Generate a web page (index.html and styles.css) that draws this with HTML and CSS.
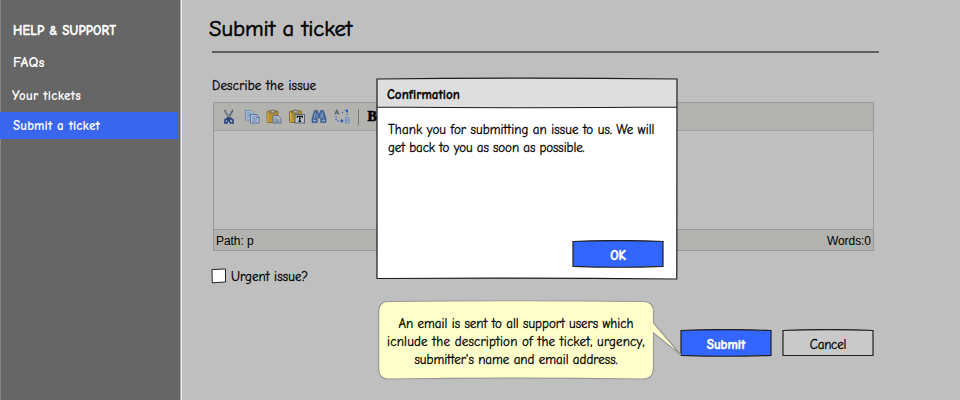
FILE: index.html
```html
<!DOCTYPE html>
<html lang="en">
<head>
<meta charset="utf-8">
<title>Submit a ticket</title>
<link rel="stylesheet" href="styles.css">
</head>
<body>
<div class="app">
  <nav class="sidebar">
    <h2 class="nav-title"><span class="t-help">HELP &amp; SUPPORT</span></h2>
    <a class="nav-item nav-faqs"><span class="t-faqs">FAQs</span></a>
    <a class="nav-item nav-tickets"><span class="t-your">Your tickets</span></a>
    <a class="nav-item active"><span class="t-nav-submit">Submit a ticket</span></a>
  </nav>
  <main class="main">
    <h1 class="title"><span class="t-title">Submit a ticket</span></h1>
    <label class="label"><span class="t-describe">Describe the issue</span></label>
    <section class="editor">
      <div class="toolbar">
        <svg class="tool" viewBox="0 0 16 16"><path d="M3.500 1l6 10M12 1l-6 10" stroke="#5f6b78" stroke-width="1.800" fill="none"/><path d="M4.500 2l4.500 7" stroke="#9aa6b0" stroke-width=".7"/><path d="M7.500 8.500L4 11v3h2l1.500-4L9.500 14h2.500v-3L8.500 8.500" fill="none" stroke="#24447e" stroke-width="1.600"/></svg>
        <svg class="tool" viewBox="0 0 16 16"><path d="M1.500 1.500h5.500l2.500 2.500v7h-8z" fill="#aebdd0" stroke="#6482ae" stroke-width=".8"/><path d="M3 4h4M3 6h5M3 8h4" stroke="#5c80b5" stroke-width=".8"/><path d="M6.500 5.500h6l2.500 2.500v6h-8.500z" fill="#b9c6d6" stroke="#4a6da6" stroke-width=".9"/><path d="M12 5.500V8.500h3M8 8h3M8 10h5M8 12h5" fill="none" stroke="#4a70aa" stroke-width=".8"/></svg>
        <svg class="tool" viewBox="0 0 16 16"><rect x="1" y="2" width="11" height="11.500" rx="1" fill="#b8922f" stroke="#84651f" stroke-width=".8"/><path d="M2 4v9" stroke="#d2b458"/><path d="M4 4V2h1.500L6.500.5 8 2h1.500v2z" fill="#b5b6a8" stroke="#595951" stroke-width=".8"/><path d="M7 6.500h5l3 3v4.500H7z" fill="#b4bdca" stroke="#47617f" stroke-width=".8"/><path d="M8.500 9h2.500M8.500 11h5M8.500 12.700h5" stroke="#506c91" stroke-width=".8"/></svg>
        <svg class="tool" viewBox="0 0 16 16"><rect x=".5" y="2" width="12" height="11.500" rx="1" fill="#b8922f" stroke="#84651f" stroke-width=".8"/><path d="M1.500 4v9" stroke="#d2b458"/><path d="M3.500 4V2h2l1-1.500L8 2h1.500v2z" fill="#b5b6a8" stroke="#595951" stroke-width=".8"/><rect x="6" y="5.500" width="9.500" height="8.500" fill="#b9c0c8" stroke="#40516a" stroke-width=".8"/><path d="M8.300 8.700V7.300h5v1.400M10.800 7.300v5M9.500 12.300H12" stroke="#111" stroke-width="1.300" fill="none"/></svg>
        <svg class="tool" viewBox="0 0 16 16"><path d="M3.500 1.500h3l.7 3h1.600l.7-3h3l2.500 8v4H9.700V9H6.300v4.500H1v-4z" fill="#446699" stroke="#34527f" stroke-width=".6"/><path d="M4.500 3.500L3 9.500M11 3.500l1.200 6M6 5v4M10 5v4" stroke="#91aacb" stroke-width=".9"/><path d="M2 11.500h3M11 11.500h3" stroke="#93aac5" stroke-width="1.400"/></svg>
        <svg class="tool" viewBox="0 0 16 16"><path d="M.8 5.500L2.800.8l2 4.700M1.600 4h2.600" fill="none" stroke="#414d60" stroke-width=".9"/><path d="M11.500 8.500h2q1.500 0 1.500 1.300T13.500 11H12h2q1.500 0 1.500 1.500T14 14h-2.500z" fill="none" stroke="#6488ca" stroke-width=".9"/><path d="M2 7.500v3l2 1.500h3" fill="none" stroke="#3464bc" stroke-width="1.300" stroke-dasharray="1.300 1.300"/><path d="M7 9.800L9.800 12 7 14zM10.500.7h3.500v3.600z" fill="#2858bb"/><path d="M8 4l2-2M13 5v2.500" fill="none" stroke="#3464bc" stroke-width="1.200" stroke-dasharray="1.300 1.300"/></svg>
        <span class="tool-sep"></span>
        <b class="tool-bold">B</b>
      </div>
      <div class="editor-body"></div>
      <div class="status"><span class="t-path">Path: p</span><span class="t-words">Words:0</span></div>
    </section>
    <label class="urgent">
      <svg class="checkbox" viewBox="0 0 16 16"><path d="M1 1.500L14.500 1V14L1.300 14.800z" fill="#fff" stroke="#222"/></svg>
      <span class="t-urgent">Urgent issue?</span>
    </label>
    <div class="actions">
      <button class="btn primary"><svg class="btn-shape" viewBox="0 0 92 28"><path d="M1 1.500Q46-.4 91 1.500L91 26.300Q46 28.200 1 26.300z"/></svg><span class="t-submit">Submit</span></button>
      <button class="btn"><svg class="btn-shape" viewBox="0 0 92 28"><path d="M1 1.500Q46-.4 91 1.500L91 26.500H1z"/></svg><span class="t-cancel">Cancel</span></button>
    </div>
  </main>

  <div class="dialog" role="dialog">
    <svg class="dialog-shape" viewBox="0 0 302 203"><path d="M1 2Q151 .2 301 2L300.800 202Q150 200.500 1 201.500z" fill="#fff"/><path d="M1 2Q151 .2 301 2V30Q151 31.500 1 30z" fill="#dedede"/><path d="M1 30Q151 31.500 301 30M1 2Q151 .2 301 2L300.800 202Q150 200.500 1 201.500z" fill="none" stroke="#1c1c1c" stroke-width="1.200"/></svg>
    <div class="dialog-content">
      <h3 class="dialog-title"><span class="t-confirm">Confirmation</span></h3>
      <p class="dialog-text"><span class="t-thank">Thank you for submitting an issue to us. We will</span><br><span class="t-get">get back to you as soon as possible.</span></p>
      <button class="btn primary dialog-ok"><svg class="btn-shape" viewBox="0 0 92 28"><path d="M1 1.500Q46-.4 91 1.500L91 26.300Q46 28.200 1 26.300z"/></svg><span class="t-ok">OK</span></button>
    </div>
  </div>

  <aside class="callout">
    <svg class="callout-shape" viewBox="0 0 304 80"><path d="M10 1.500Q140 0 265 1.500Q275.500 1.500 275.500 12V23L303 55L275.500 33V68Q275.500 79 265 79Q140 77.300 10 79Q.7 79 .7 68V12Q.7 1.500 10 1.500z" fill="#ffffcb" stroke="#999" stroke-width="1.200"/></svg>
    <p class="callout-text"><span class="t-c1">An email is sent to all support users which</span><br><span class="t-c2">icnlude the description of the ticket, urgency,</span><br><span class="t-c3">submitter's name and email address.</span></p>
  </aside>
</div>
</body>
</html>
```
FILE: styles.css
```css
* { box-sizing: border-box; }
body {
  margin: 0;
  background: #bfbfbf;
  color: #000;
  font: 13px/18px "Comic Sans MS", "Comic Neue", Lato, sans-serif;
  -webkit-text-stroke: .3px currentColor;
}
h1, h2, h3, p { margin: 0; }
svg { display: block; }
span { white-space: nowrap; }

.app {
  position: relative;
  display: grid;
  grid-template-columns: 182px 1fr;
  width: 960px;
  height: 400px;
  overflow: hidden;
}

.sidebar {
  display: flex;
  flex-direction: column;
  padding-top: 22px;
  background: linear-gradient(90deg, #888 0 1px, #666 1px 180px, #aaa 180px 181px, #f0f0f0 181px 182px);
  color: #fff;
  -webkit-text-stroke: 0;
}
.nav-title, .nav-item { height: 18px; padding-left: 13px; font-size: 13px; line-height: 18px; font-weight: 700; }
.nav-faqs { margin-top: 14px; }
.nav-tickets { margin-top: 15px; padding-left: 12px; }
.active { width: 178px; height: 27px; margin-top: 7px; line-height: 27px; background: #3a66ed; }

.t-help { letter-spacing: .15px; -webkit-text-stroke: .4px #fff; }
.t-faqs { font-size: 14px; letter-spacing: .4px; }
.t-your { letter-spacing: .25px; }
.t-nav-submit { letter-spacing: .15px; }
.t-describe { letter-spacing: .2px; }
.t-confirm { letter-spacing: .05px; }
.t-thank { letter-spacing: .07px; }
.t-get { letter-spacing: -.08px; }
.t-c1 { letter-spacing: .01px; }
.t-c2 { letter-spacing: .2px; }
.t-cancel { letter-spacing: -.2px; }
.t-urgent { padding-top: 2px; letter-spacing: .1px; }

.main { padding: 15px 81px 0 30px; }
.title { height: 37px; margin-left: -3px; font-size: 22.5px; line-height: 28px; font-weight: 400; -webkit-text-stroke: .6px #000; }
.title + .label { border-top: 2px solid #606060; }
.label { display: block; width: 667px; height: 51px; margin-top: -1px; padding-top: 24px; }
.editor { display: flex; flex-direction: column; width: 661px; height: 149px; margin-left: 1px; border: 1px solid #999; }
.toolbar { display: flex; align-items: center; height: 28px; padding-left: 7px; background: #b2b2af; border-bottom: 1px solid #a1a19f; }
.tool { width: 16px; height: 16px; margin: 1px 6.6px 0 0; }
.tool-sep { width: 1px; height: 16px; margin: 0 9px 0 1px; background: #777; }
.tool-bold { font: 900 14px/16px "Liberation Serif", serif; -webkit-text-stroke: .7px #000; }
.editor-body { flex: 1; }
.status { display: flex; justify-content: space-between; height: 21px; padding: 0 2px; border-top: 1px solid #999; background: #b2b2af; font: 12px/23px "Liberation Sans", sans-serif; -webkit-text-stroke: 0; }
.t-path, .t-words { letter-spacing: -.05px; }
.urgent { display: flex; align-items: center; gap: 4px; height: 18px; margin: 16px 0 0 -1px; }
.checkbox { width: 16px; height: 16px; }
.actions { display: flex; justify-content: flex-end; gap: 10px; margin: 44px 5px 0 0; }

.btn { display: grid; place-items: center; width: 92px; height: 28px; padding: 0; border: 0; background: none; font: inherit; color: #000; }
.btn > * { grid-area: 1 / 1; }
.btn > span { margin-top: 4px; }
.btn-shape { width: 92px; height: 28px; fill: #c9c9c9; stroke: #202020; stroke-width: 1.2; }
.primary { color: #fff; font-weight: 700; -webkit-text-stroke: .5px #fff; }
.primary .btn-shape { fill: #3366ff; }

.dialog { position: absolute; left: 376px; top: 77px; display: grid; width: 302px; height: 203px; }
.dialog > *, .callout > * { grid-area: 1 / 1; }
.dialog-shape { width: 302px; height: 203px; }
.dialog-content { display: flex; flex-direction: column; padding: 9px 14px 12px 11px; }
.dialog-title { font-size: 13px; line-height: 18px; font-weight: 700; }
.dialog-text { padding: 17px 0 0 1px; }
.dialog-ok { margin: auto 0 0 auto; }

.callout { position: absolute; left: 378px; top: 300px; display: grid; width: 304px; height: 80px; }
.callout-shape { width: 304px; height: 80px; }
.callout-text { width: 276px; padding-top: 15px; text-align: center; }
```
